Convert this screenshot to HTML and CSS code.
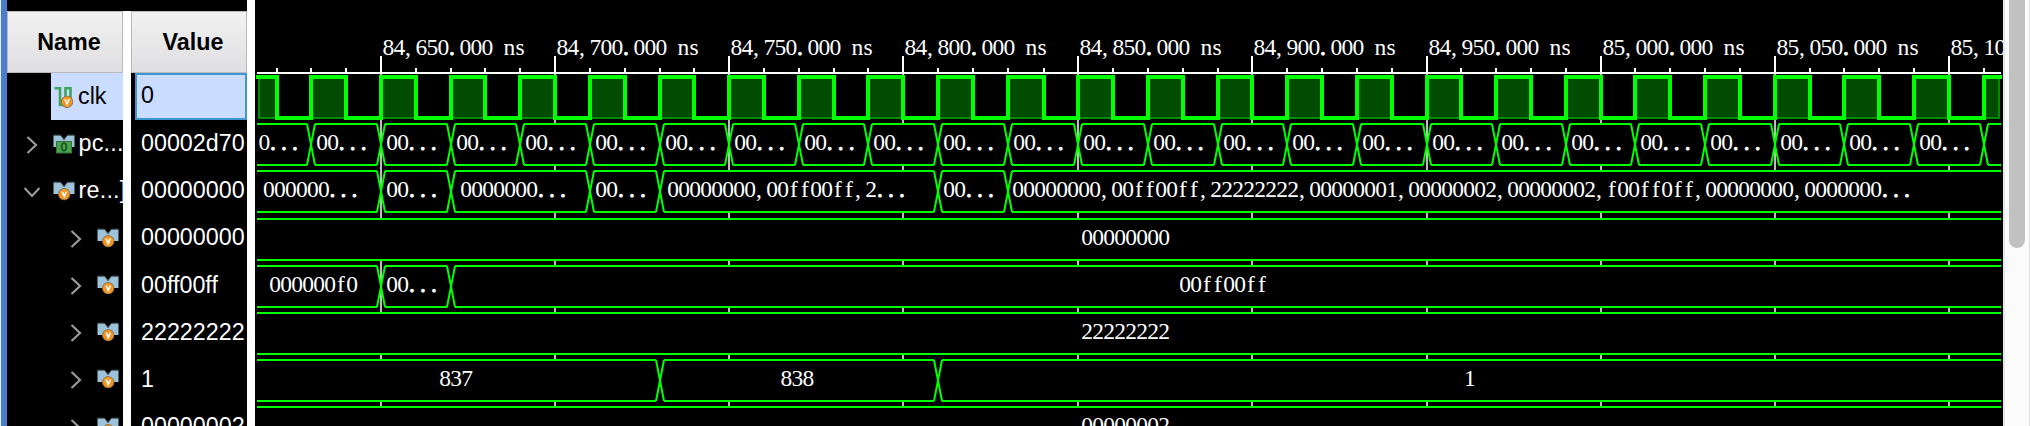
FILE: index.html
```
<!DOCTYPE html>
<html lang="en">
<head>
<meta charset="utf-8">
<title>Waveform viewer</title>
<link rel="stylesheet" href="styles.css">
</head>
<body>
<svg class="defs" width="0" height="0" aria-hidden="true">
  <symbol id="right" viewBox="0 0 16 18"><path d="M3.5 1l8.5 8-8.5 8" fill="none" stroke="#9a9a9a" stroke-width="2.2"/></symbol>
  <symbol id="down" viewBox="0 0 16 18"><path d="M.5 5l7.500 8 7.500-8" fill="none" stroke="#9a9a9a" stroke-width="2.2"/></symbol>
  <symbol id="badge" viewBox="0 0 12 12"><circle cx="6" cy="6" r="5.500" fill="#f7941e" stroke="#85704c" stroke-width=".9"/><path d="M4 3.500L6 8.200l2-4.700" fill="none" stroke="#fff" stroke-width="1.500"/></symbol>
  <symbol id="bus" viewBox="0 0 22 20"><path d="M.5 1.500h7L11 6l3.500-4.500h7v11.500h-21z" fill="#9cc3d9"/><path d="M.5 1.200h7L11 5.500l3.500-4.300h7" fill="none" stroke="#53636c" stroke-width="1"/></symbol>
  <symbol id="bus-v" viewBox="0 0 22 20"><use href="#bus" width="22" height="20"/><use href="#badge" x="5" y="7" width="12.500" height="12.500"/></symbol>
  <symbol id="bus-o" viewBox="0 0 22 20"><use href="#bus" width="22" height="20"/><rect x="3.500" y="7.500" width="15" height="11.500" fill="#43a546" stroke="#3c6b3d"/><ellipse cx="11" cy="13" rx="2.400" ry="3.800" fill="none" stroke="#24522a" stroke-width="1.700"/></symbol>
  <symbol id="clock" viewBox="0 0 20 22"><path d="M.5 2.300H6v16.700h5.500V2.300h5v13" fill="none" stroke="#3fa45b" stroke-width="2.600"/><use href="#badge" x="6.800" y="9.500" width="12.500" height="12.500"/></symbol>
</svg>
<div class="viewer">
  <div class="edge"></div>
  <div class="tree">
    <section class="column names">
      <header class="head">Name</header>
      <div class="row"><div class="picked"><svg class="clock"><use href="#clock"/></svg><span>clk</span></div></div>
      <div class="row top"><svg class="arrow"><use href="#right"/></svg><svg class="icon"><use href="#bus-o"/></svg><span>pc...</span></div>
      <div class="row top"><svg class="arrow"><use href="#down"/></svg><svg class="icon"><use href="#bus-v"/></svg><span>re...]</span></div>
      <div class="row child"><svg class="arrow"><use href="#right"/></svg><svg class="icon"><use href="#bus-v"/></svg></div>
      <div class="row child"><svg class="arrow"><use href="#right"/></svg><svg class="icon"><use href="#bus-v"/></svg></div>
      <div class="row child"><svg class="arrow"><use href="#right"/></svg><svg class="icon"><use href="#bus-v"/></svg></div>
      <div class="row child"><svg class="arrow"><use href="#right"/></svg><svg class="icon"><use href="#bus-v"/></svg></div>
      <div class="row child"><svg class="arrow"><use href="#right"/></svg><svg class="icon"><use href="#bus-v"/></svg></div>
    </section>
    <section class="column values">
      <header class="head">Value</header>
      <div class="row"><div class="editing">0</div></div>
      <div class="row value">00002d70</div>
      <div class="row value">00000000</div>
      <div class="row value">00000000</div>
      <div class="row value">00ff00ff</div>
      <div class="row value">22222222</div>
      <div class="row value">1</div>
      <div class="row value">00000002</div>
    </section>
  </div>
  <svg class="wave" id="wave" viewBox="255 0 1748 426"></svg>
  <div class="scroll"><div class="thumb"></div></div>
</div>
<script src="wave.js"></script>
</body>
</html>
```
FILE: styles.css
```
* { box-sizing: border-box; }
body { margin: 0; background: #fff; overflow: hidden; font: 23.3px "Liberation Sans", Arial, sans-serif; }
.defs { display: block; width: 0; height: 0; }
.viewer { display: flex; width: 2030px; height: 426px; overflow: hidden; }
.edge { flex: none; width: 7px; background: #4a7dcd; border-left: 1px solid #e8eefa; }
.tree { flex: none; display: flex; gap: 8px; width: 240px; margin-right: 8px; border-top: 11px solid #000; height: 426px; overflow: hidden; }
.column { width: 116px; height: 600px; background: #000; color: #fff; overflow: hidden; }
.head { height: 62px; padding: 0 0 0 8px; border: 1px solid #b9b9bb; background: linear-gradient(#f2f2f2, #dfdfe1); color: #000; font-weight: bold; line-height: 60px; text-align: center; }
.row { display: flex; align-items: center; height: 47.15px; white-space: nowrap; line-height: 45px; }
.row > svg, .picked > svg { flex: none; }
.picked { display: flex; align-items: center; width: 72px; height: 47px; margin-left: 44px; padding-left: 3px; background: #cadcff; color: #000; }
.clock { width: 20px; height: 22px; margin-right: 4px; }
.top { padding-left: 17px; }
.child { padding-left: 61px; }
.arrow { width: 16px; height: 18px; margin-top: 2px; }
.icon { width: 22px; height: 20px; margin: 0 3px 0 13px; }
.top span { letter-spacing: .2px; margin-left: .6px; }
.editing { width: 118px; height: 47px; margin-left: 4px; padding-left: 4px; border: 2px solid #3e97d1; background: #cadcff; color: #000; line-height: 41px; }
.value { padding-left: 10px; }
.wave { flex: none; display: block; width: 1748px; height: 426px; background: #000; }
.wave text { fill: #fff; font: 23.5px "Liberation Serif", "Times New Roman", serif; white-space: pre; }
.wave .dot { stroke: #fff; stroke-width: .9px; }
.grid { stroke: #bcbcbc; stroke-width: 2; }
.ruler { stroke: #fff; stroke-width: 2; }
.high { fill: #004c00; }
.base { fill: none; stroke: #008c00; stroke-width: 2; }
.clk { fill: none; stroke: #0f0; stroke-width: 4; }
.cell { fill: #000; }
.bus { fill: none; stroke: #0f0; stroke-width: 2; }
.scroll { flex: 1; padding-left: 4px; border-left: 2px solid #e6e6e6; border-right: 1px solid #e2e2e2; background: #fbfbfb; }
.thumb { width: 16px; height: 248px; border-radius: 0 0 8px 8px; background: #c1c1c1; }
```
FILE: wave.js
```
const LEFT = 257, RIGHT = 2001, PITCH = 11;
// Pixel column of each 10 ns tick, starting three ticks before 84,650 ns
const TICKS = [277, 311, 346, 381, 416, 451, 485, 520, 555, 590, 625, 660, 694, 729, 764, 799, 834,
  868, 903, 938, 973, 1008, 1044, 1078, 1113, 1148, 1183, 1218, 1252, 1287, 1322, 1357, 1392, 1427,
  1461, 1496, 1531, 1566, 1601, 1635, 1670, 1705, 1740, 1775, 1810, 1844, 1879, 1914, 1949, 1984];
const at = k => TICKS[k + 3];
const shapes = [];
const path = (cls, d) => shapes.push(`<path class="${cls}" d="${d}"/>`);

// Fixed-pitch label: every character gets its own cell.
function label(x, y, s) {
  const nudge = { f: 1.5, s: 1, '.': 0.5, ',': 0.5 };
  const xs = [...s].map((c, i) => x + i * PITCH + (nudge[c] || -0.1));
  const body = s.replace(/\.+/g, '<tspan class="dot">$&</tspan>');
  shapes.push(`<text x="${xs.join(' ')}" y="${y}">${body}</text>`);
}

// Time grid and ruler
for (let k = 0; k <= 45; k += 5) path('grid', `M${at(k)} 74V426`);
path('ruler', `M${LEFT} 73H${RIGHT}`);
for (let k = -3; k <= 46; k++) path('ruler', `M${at(k)} ${k >= 0 && k % 5 === 0 ? 56 : 68}V73`);
for (let i = 0; i < 10; i++) {
  const t = 84650 + i * 50;
  label(at(i * 5) + 1.6, 55, `${Math.floor(t / 1000)},${String(t % 1000).padStart(3, '0')}.000 ns`);
}

// Clock
let d = `M256 77H${at(-3)}V118`;
const pulse = (a, b) => { path('high', `M${a} 79H${b}V118H${a}z`); path('base', `M${a} 118H${b}`); };
pulse(258, at(-3));
path('base', 'M259 79V118');
for (let k = -2; k < 46; k += 2) {
  pulse(at(k), at(k + 1));
  d += `H${at(k)}V77H${at(k + 1)}V118`;
}
pulse(at(46), 2000);
path('base', 'M1999 79V118');
path('clk', d + `H${at(46)}V77H2002`);

// Bus rows: changes are tick indices, labels are [x, text]
function bus(top, changes, labels) {
  const bottom = top + 41, mid = top + 20.5;
  const xs = [LEFT - 8, ...changes.map(at), RIGHT + 8];
  const last = xs.length - 2;
  for (let i = 0; i <= last; i++) {
    const a = xs[i], b = xs[i + 1];
    const l = i ? a + 4 : LEFT, r = i < last ? b - 4 : RIGHT;
    path('cell', `M${i ? a + .5 : l} ${mid}L${l} ${top}H${r}L${i < last ? b - .5 : r} ${mid}L${r} ${bottom}H${l}z`);
  }
  for (let i = 0; i <= last; i++) {
    const l = i ? xs[i] + 4 : LEFT, r = i < last ? xs[i + 1] - 4 : RIGHT;
    path('bus', `M${l} ${top}H${r}M${l} ${bottom}H${r}`);
    if (i) path('bus', `M${xs[i] - 4} ${top}L${xs[i] + 4} ${bottom}M${xs[i] + 4} ${top}L${xs[i] - 4} ${bottom}`);
  }
  for (const [x, s] of labels) label(x, top + 26, s);
}
const even = Array.from({ length: 25 }, (_, i) => i * 2 - 2);
bus(124, even, [[258.5, '0...'], ...even.slice(0, -1).map(k => [at(k) + 5.3, '00...'])]);
bus(171, [0, 2, 6, 8, 16, 18], [
  [263, '000000...'], [386.4, '00...'], [460.4, '0000000...'], [595.4, '00...'],
  [667.4, '00000000,00ff00ff,2...'], [943.4, '00...'],
  [1012.4, '00000000,00ff00ff,22222222,00000001,00000002,00000002,f00ff0ff,00000000,0000000...']
]);
bus(219, [], [[1081.4, '00000000']]);
bus(266, [0, 2], [[269.4, '000000f0'], [386.4, '00...'], [1179.4, '00ff00ff']]);
bus(313, [], [[1081.4, '22222222']]);
bus(360, [8, 16], [[439.4, '837'], [780.7, '838'], [1464, '1']]);
bus(407, [], [[1081.4, '00000002']]);

document.getElementById('wave').innerHTML = shapes.join('');
```
